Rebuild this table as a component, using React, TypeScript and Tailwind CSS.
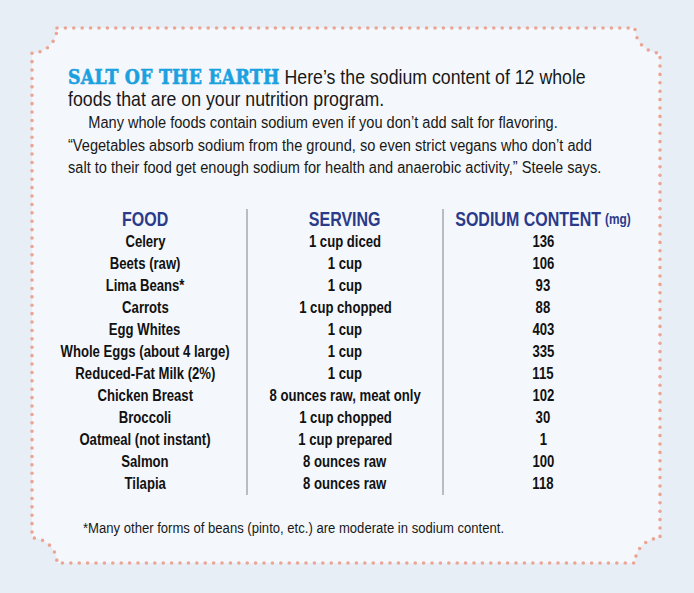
import React from 'react'

const rows: [string, string, string][] = [
  ['Celery', '1 cup diced', '136'],
  ['Beets (raw)', '1 cup', '106'],
  ['Lima Beans*', '1 cup', '93'],
  ['Carrots', '1 cup chopped', '88'],
  ['Egg Whites', '1 cup', '403'],
  ['Whole Eggs (about 4 large)', '1 cup', '335'],
  ['Reduced-Fat Milk (2%)', '1 cup', '115'],
  ['Chicken Breast', '8 ounces raw, meat only', '102'],
  ['Broccoli', '1 cup chopped', '30'],
  ['Oatmeal (not instant)', '1 cup prepared', '1'],
  ['Salmon', '8 ounces raw', '100'],
  ['Tilapia', '8 ounces raw', '118'],
]

const frame =
  'M 57 28 H 635 A 25 25 0 0 0 660 53 V 538 A 25 25 0 0 0 635 563 H 57 A 25 25 0 0 0 32 538 V 53 A 25 25 0 0 0 57 28 Z'

// condensed magazine type: Liberation Sans squeezed horizontally
function Line({ children, className = '' }: { children: React.ReactNode; className?: string }) {
  return <div className={`origin-left scale-x-[0.844] whitespace-nowrap ${className}`}>{children}</div>
}

function Column({ head, cells, divider }: { head: React.ReactNode; cells: string[]; divider?: boolean }) {
  return (
    <div className={`flex flex-col items-center ${divider ? 'border-l-2 border-[#b9bcc0]' : ''}`}>
      <div className="h-[22px] flex items-center scale-x-[0.82] text-[19.5px] font-bold text-[#2b3a8a] whitespace-nowrap">
        {head}
      </div>
      {cells.map((c, i) => (
        <div
          key={i}
          className="h-[22px] flex items-center scale-x-[0.82] text-[16px] font-bold text-[#111] whitespace-nowrap"
        >
          {c}
        </div>
      ))}
    </div>
  )
}

export default function App() {
  return (
    <div className="relative w-[694px] h-[593px] overflow-hidden bg-[#e7eef5] font-['Liberation_Sans',Arial,sans-serif]">
      {/* dotted ticket frame */}
      <svg className="absolute inset-0" width="694" height="593" viewBox="0 0 694 593">
        <path d={frame} fill="#f4f8fc" />
        <path
          d={frame}
          fill="none"
          stroke="#eba595"
          strokeWidth="3.6"
          strokeLinecap="round"
          strokeDasharray="0 8.4"
        />
      </svg>

      <div className="relative pl-[44px] pt-[66px] text-[#181818]">
        <div className="pl-[24px]">
          <div className="text-[21px] leading-[22px]">
            <Line>
              <span className="font-['DejaVu_Serif',serif] font-bold leading-none text-[20.5px] tracking-[0.3px] text-[#1ba0e0] [-webkit-text-stroke:0.6px_#1ba0e0]">
                SALT OF THE EARTH
              </span>{' '}
              Here’s the sodium content of 12 whole
            </Line>
            <Line>foods that are on your nutrition program.</Line>
          </div>
          <div className="mt-[1px] text-[17.3px] leading-[22.5px]">
            <Line className="pl-[24px]">Many whole foods contain sodium even if you don’t add salt for flavoring.</Line>
            <Line>“Vegetables absorb sodium from the ground, so even strict vegans who don’t add</Line>
            <Line>salt to their food get enough sodium for health and anaerobic activity,” Steele says.</Line>
          </div>
        </div>

        <div className="mt-[30px] grid grid-cols-[202px_196px_200px]">
          <Column head="FOOD" cells={rows.map((r) => r[0])} />
          <Column head="SERVING" cells={rows.map((r) => r[1])} divider />
          <Column
            head={
              <>
                SODIUM CONTENT <span className="ml-[5px] text-[14.5px]">(mg)</span>
              </>
            }
            cells={rows.map((r) => r[2])}
            divider
          />
        </div>

        <div className="mt-[21px] pl-[39px] text-[15.5px]">
          <Line>*Many other forms of beans (pinto, etc.) are moderate in sodium content.</Line>
        </div>
      </div>
    </div>
  )
}
